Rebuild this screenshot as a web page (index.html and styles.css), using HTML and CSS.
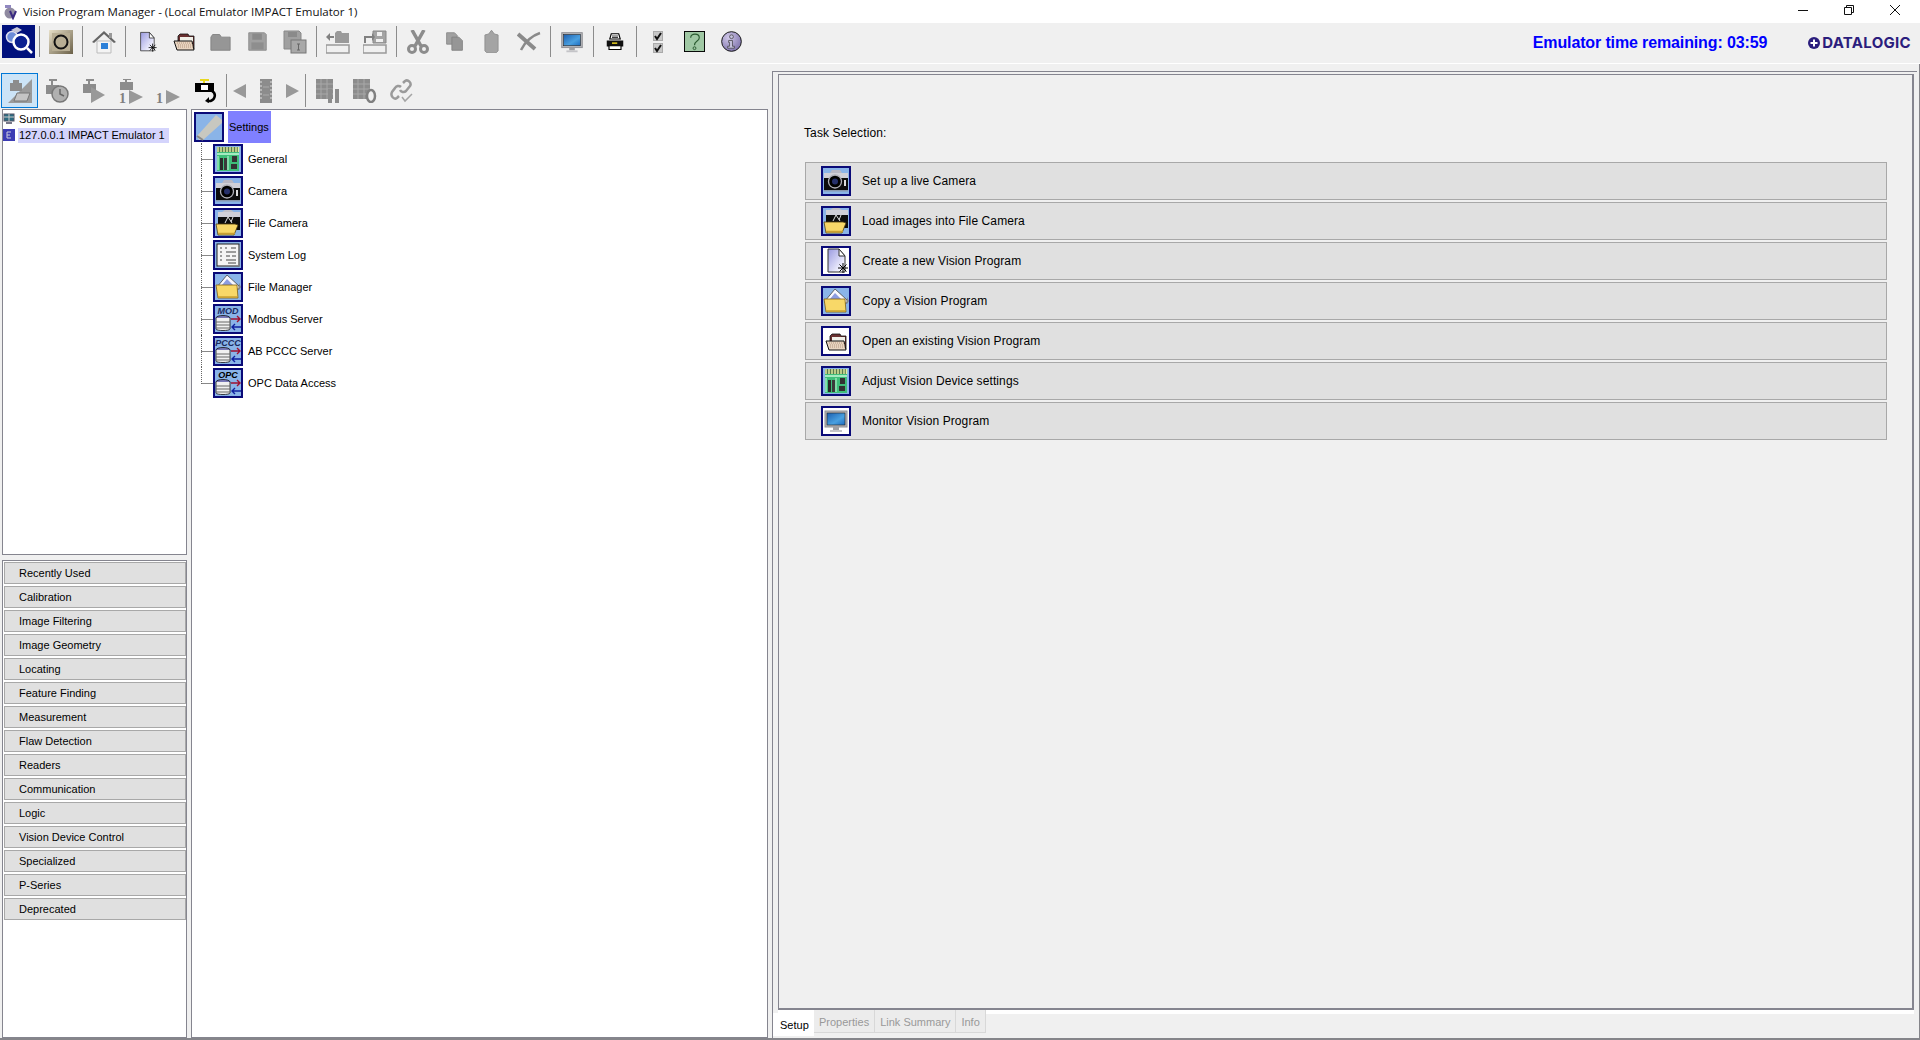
FILE: index.html
```html
<!DOCTYPE html>
<html lang="en">
<head>
<meta charset="utf-8">
<title>Vision Program Manager</title>
<link rel="stylesheet" href="styles.css">
</head>
<body>
<svg class="defs" width="0" height="0" aria-hidden="true">
  <defs>
    <linearGradient id="docg" x1="0" y1="0" x2="1" y2="1"><stop offset="0" stop-color="#9a9ae0"/><stop offset=".8" stop-color="#f4f4ff"/><stop offset="1" stop-color="#fff"/></linearGradient>
    <linearGradient id="scr" x1="0" y1="0" x2="1" y2="1"><stop offset="0" stop-color="#1c5fb0"/><stop offset=".6" stop-color="#4aa0e0"/><stop offset="1" stop-color="#1c6cc0"/></linearGradient>
    <linearGradient id="bev" x1="0" y1="0" x2="1" y2="1"><stop offset="0" stop-color="#e8e0c8"/><stop offset="1" stop-color="#6a6048"/></linearGradient>
    <radialGradient id="inf" cx=".35" cy=".3" r=".8"><stop offset="0" stop-color="#d0c8e8"/><stop offset="1" stop-color="#7a6ea8"/></radialGradient>

    <symbol id="board" viewBox="0 0 30 30">
      <rect x="4" y="3" width="22" height="24" fill="#3fbf7a"/>
      <rect x="4" y="3" width="22" height="5" fill="#5a7a50"/>
      <path d="M5 3v5M8 3v5M11 3v5M14 3v5M17 3v5M20 3v5M23 3v5M25.500 3v5" stroke="#e4f0a0" stroke-width="1.400"/>
      <path d="M4 10h22" stroke="#c8f8d8" stroke-width="1.500"/>
      <rect x="7" y="14" width="3" height="12" fill="#2a2a2a"/>
      <rect x="11" y="14" width="3" height="12" fill="#3a3a3a"/>
      <rect x="19" y="12" width="5" height="6" fill="#333"/>
      <rect x="18" y="20" width="6" height="5" fill="#333"/>
      <path d="M15 12v14M5 12v14" stroke="#c8f8d8" stroke-width="1"/>
    </symbol>
    <symbol id="camera" viewBox="0 0 30 30">
      <path d="M9 7l2-3h8l2 3z" fill="#b8b8c4"/>
      <rect x="3" y="7" width="24" height="6" fill="#d0d0d8"/>
      <rect x="3" y="12" width="24" height="12" fill="#0c0c0c"/>
      <rect x="3" y="24" width="24" height="1.500" fill="#8898b0"/>
      <circle cx="14" cy="15.500" r="6.500" fill="#000" stroke="#b0b0b8" stroke-width="1.300"/>
      <circle cx="14" cy="15.500" r="3" fill="#26306a"/>
      <path d="M23 14h2v6h-2z" fill="#ddd"/>
    </symbol>
    <symbol id="filecam" viewBox="0 0 30 30">
      <path d="M9 4l3-2h6l3 2z" fill="#c0c0c8"/>
      <rect x="5" y="4" width="22" height="5" fill="#d0d0d8"/>
      <rect x="5" y="9" width="22" height="13" fill="#0c0c0c"/>
      <path d="M12 15l3-6 4 6M20 9l-2 5" stroke="#ddd" stroke-width="1" fill="none"/>
      <path d="M3 16h19l3 1-4 10H5z" fill="#f8d868" stroke="#504010" stroke-width=".8"/>
      <path d="M5 25.500h17" stroke="#c8a030" stroke-width="1.500"/>
    </symbol>
    <symbol id="syslog" viewBox="0 0 30 30">
      <rect x="4" y="4" width="22" height="22" fill="#f4f4f4" stroke="#222" stroke-width="1"/>
      <path d="M7 8h2M12 8h2M18 8h5M7 12h2M13 12h10M7 16h2M13 16h4M19 16h4M7 20h2M13 20h10M15 23h8" stroke="#444" stroke-width="1.100"/>
      <path d="M26 5v21H5" stroke="#888" stroke-width="1.200" fill="none"/>
    </symbol>
    <symbol id="copyfolder" viewBox="0 0 30 30">
      <path d="M4 15L14 3l12 11v3H4z" fill="#f8f8ff" stroke="#444" stroke-width=".8"/>
      <path d="M9 13l5-6 6 6z" fill="#8c9ce0"/>
      <path d="M26 11l2 4-2 3z" fill="#888"/>
      <path d="M3 13h21l1 13H5z" fill="#f8d868" stroke="#806010" stroke-width=".8"/>
      <path d="M5 25h19" stroke="#c8a030" stroke-width="1.500"/>
    </symbol>
    <symbol id="server" viewBox="0 0 30 30">
      <ellipse cx="10" cy="14" rx="7" ry="2.500" fill="#7878b8" stroke="#111" stroke-width=".8"/>
      <path d="M3 14v11c0 2 14 2 14 0V14" fill="#f0f0f0" stroke="#111" stroke-width=".8"/>
      <path d="M3 18h14M3 21h14M3 24h14" stroke="#666" stroke-width="1"/>
      <path d="M18 15h9M24 12l3 3-3 3" fill="none" stroke="#a01030" stroke-width="1.400"/>
      <path d="M28 23h-9M22 20l-3 3 3 3" fill="none" stroke="#1020a0" stroke-width="1.400"/>
    </symbol>
    <symbol id="newdoc" viewBox="0 0 30 30">
      <path d="M7 3h11l6 7v16H7z" fill="url(#docg)" stroke="#333" stroke-width="1"/>
      <path d="M18 3v7h6z" fill="#fff" stroke="#333" stroke-width="1"/>
      <g stroke="#000" stroke-width="1"><path d="M22 17v10M17 22h10M18.500 18.500l7 7M25.500 18.500l-7 7"/></g>
    </symbol>
    <symbol id="openfolder" viewBox="0 0 30 30">
      <path d="M9 10l2-2h8l1 2h5v13H9z" fill="#6a3030" stroke="#111" stroke-width=".8"/>
      <path d="M11 11h13v11H11z" fill="#f0f0e8"/>
      <path d="M5 15h18l2 9H8z" fill="#e8d4c0" stroke="#111" stroke-width="1"/>
      <path d="M8 17h15M9 19h15M9 21h15" stroke="#a88870" stroke-width=".8" stroke-dasharray="1 1"/>
    </symbol>
    <symbol id="monitor" viewBox="0 0 30 30">
      <rect x="4" y="5" width="22" height="16" fill="#b4b4b8" stroke="#909094" stroke-width="1"/>
      <rect x="6" y="7" width="18" height="12" fill="url(#scr)" stroke="#222" stroke-width=".6"/>
      <path d="M12 21h6v3h-6z" fill="#a0a0a4"/>
      <path d="M9 24h12v2H9z" fill="#c4c4c8"/>
    </symbol>
  </defs>
</svg>

<div class="app">
  <header class="titlebar">
    <svg class="app-icon" viewBox="0 0 16 16"><circle cx="7" cy="9" r="5.500" fill="#8f8aa0"/><path d="M2 1h6v3H2z" fill="#9088c0"/><path d="M7 7l3 7 3-7" fill="none" stroke="#3a2a80" stroke-width="2"/></svg>
    <span class="title-text">Vision Program Manager - (Local Emulator IMPACT Emulator 1)</span>
    <div class="win-controls">
      <svg class="win-btn" viewBox="0 0 10 10"><path d="M0 5.500h10" stroke="#111" fill="none"/></svg>
      <svg class="win-btn" viewBox="0 0 10 10"><path d="M.5 2.500h7v7h-7zM2.500 2.500v-2h7v7h-2" stroke="#111" fill="none"/></svg>
      <svg class="win-btn" viewBox="0 0 10 10"><path d="M0 0l10 10M10 0L0 10" stroke="#111" fill="none"/></svg>
    </div>
  </header>

  <div class="toolbar">
    <button class="app-btn" type="button">
      <svg viewBox="0 0 33 33" width="33" height="33"><rect width="33" height="33" fill="#00107c"/><circle cx="10" cy="12" r="5.500" fill="#6c8cd8" stroke="#dde" stroke-width="1.500"/><path d="M9 5l6-3 5 3-5 3z" fill="#c8c8d8"/><circle cx="19" cy="17" r="7.500" fill="#0a2090" stroke="#fff" stroke-width="2.500"/><path d="M25 23l5 5" stroke="#fff" stroke-width="2.500"/></svg>
    </button>
    <i class="sep"></i>
    <div class="tool-group">
      <span class="slot"><svg viewBox="0 0 24 24" class="i24"><rect width="24" height="24" fill="url(#bev)"/><rect x="3" y="3" width="18" height="18" fill="#b8ae94"/><circle cx="12" cy="12" r="6.500" fill="none" stroke="#111" stroke-width="2"/></svg></span>
    </div>
    <i class="sep"></i>
    <div class="tool-group">
      <span class="slot"><svg viewBox="0 0 24 24" class="i24"><path d="M5 11h14v12H5z" fill="#f4f4f4" stroke="#bbb"/><path d="M0 12L12 1l12 11-2 1L12 4 2 13z" fill="#666"/><path d="M17 3h3v5h-3z" fill="#999"/><rect x="9" y="13" width="7" height="6" fill="#2c80d8"/></svg></span>
    </div>
    <i class="sep"></i>
    <div class="tool-group">
      <span class="slot"><svg viewBox="0 0 30 30" class="i24"><use href="#newdoc"/></svg></span>
      <span class="slot"><svg viewBox="4 6 22 20" class="i-open"><use href="#openfolder" width="30" height="30"/></svg></span>
      <span class="slot"><svg viewBox="0 0 24 24" class="i20"><path d="M1 7l2-3h8l2 3h10v15H1z" fill="#969696" stroke="#808080"/></svg></span>
      <span class="slot"><svg viewBox="0 0 24 24" class="i20"><path d="M2 2h18l2 2v18H2z" fill="#a0a0a0" stroke="#8a8a8a"/><rect x="6" y="3" width="11" height="7" fill="#8a8a8a"/><rect x="5" y="13" width="14" height="8" fill="#8e8e8e"/></svg></span>
      <span class="slot"><svg viewBox="0 0 24 24" class="i24"><path d="M1 1h15l2 2v16H1z" fill="#a0a0a0" stroke="#888"/><rect x="5" y="2" width="9" height="5" fill="#8a8a8a"/><rect x="8" y="10" width="15" height="13" fill="#a8a8a8" stroke="#777"/><path d="M14 14h3M15.500 14v6M14 20h3" stroke="#666"/></svg></span>
    </div>
    <i class="sep"></i>
    <div class="tool-group">
      <span class="slot"><svg viewBox="0 0 24 24" class="i24"><path d="M0 15h23v8H0z" fill="#f0f0f0" stroke="#999" stroke-width="1.500"/><path d="M9 3l2-2h4l1 2h7v10H9z" fill="#9a9a9a"/><path d="M8 6H4V3L0 7l4 4V8h4z" fill="#808080"/></svg></span>
      <span class="slot"><svg viewBox="0 0 24 24" class="i24"><path d="M0 15h23v8H0z" fill="#f0f0f0" stroke="#999" stroke-width="1.500"/><path d="M10 1h13v12H10z" fill="#a4a4a4" stroke="#888"/><path d="M14 2h5v4h-5zM13 9h7v3h-7z" fill="#f0f0f0"/><path d="M9 8H3v5H1V6h8V3l3 4-3 4z" fill="#808080"/></svg></span>
    </div>
    <i class="sep"></i>
    <div class="tool-group">
      <span class="slot"><svg viewBox="0 0 24 24" class="i24"><g fill="none" stroke="#8c8c8c" stroke-width="3.500"><path d="M6 0l9 16M18 0L9 16"/></g><g fill="none" stroke="#8c8c8c" stroke-width="3"><circle cx="6" cy="19" r="3.500"/><circle cx="18" cy="19" r="3.500"/></g></svg></span>
      <span class="slot"><svg viewBox="0 0 24 24" class="i20"><path d="M3 2h9l3 3v10H3z" fill="#a0a0a0" stroke="#888"/><path d="M9 7h8l4 4v11H9z" fill="#969696" stroke="#808080"/></svg></span>
      <span class="slot"><svg viewBox="0 0 16 24" class="clip"><path d="M1 5l4-1 3-4 3 4 4 1v17l-2 2H3l-2-2z" fill="#a4a4a4" stroke="#909090"/></svg></span>
      <span class="slot"><svg viewBox="0 0 24 24" class="i24"><path d="M1 4l17 15" stroke="#8a8a8a" stroke-width="4" fill="none"/><path d="M23 3C14 6 8 12 4 20" stroke="#8a8a8a" stroke-width="2.500" fill="none"/></svg></span>
    </div>
    <i class="sep"></i>
    <div class="tool-group">
      <span class="slot"><svg viewBox="0 0 30 30" class="i28"><use href="#monitor"/></svg></span>
    </div>
    <i class="sep"></i>
    <div class="tool-group">
      <span class="slot"><svg viewBox="0 0 24 24" class="i18"><path d="M7 1h10l2 7H5z" fill="#fff" stroke="#000" stroke-width="1.500"/><path d="M1 10h22v8H1z" fill="#111"/><path d="M4 17h16v5H4z" fill="#fff" stroke="#000" stroke-width="1.500"/><path d="M8 12.500h7v2H8z" fill="#e8d020"/><path d="M8 4h8M8 6h8" stroke="#000"/></svg></span>
    </div>
    <i class="sep"></i>
    <div class="tool-group">
      <span class="slot"><svg viewBox="0 0 10 22" class="check"><rect x=".5" y=".5" width="9" height="9" fill="#c8c8c8" stroke="#aaa"/><rect x=".5" y="12.500" width="9" height="9" fill="#c8c8c8" stroke="#aaa"/><path d="M2 5l2 3 4-6M2 17l2 3 4-6" fill="none" stroke="#111" stroke-width="2"/></svg></span>
      <span class="slot"><svg viewBox="0 0 22 22" class="i21"><rect x=".5" y=".5" width="21" height="21" fill="#a0c8a4" stroke="#000"/><path d="M7 7c0-5 9-5 9 0 0 4-5 3-5 8" fill="none" stroke="#2a5a30" stroke-width="1.200"/><circle cx="11" cy="18" r="1.500" fill="none" stroke="#2a5a30"/></svg></span>
      <span class="slot"><svg viewBox="0 0 22 22" class="i21"><circle cx="11" cy="11" r="10.300" fill="url(#inf)" stroke="#111"/><circle cx="11" cy="6" r="2" fill="#c8c4e0" stroke="#333" stroke-width=".7"/><path d="M8 10h4v6h2v2H7v-2h2v-4H8z" fill="#c8c4e0" stroke="#333" stroke-width=".7"/></svg></span>
    </div>
    <div class="status">
      <span class="emu-time">Emulator time remaining: 03:59</span>
      <span class="logo"><svg class="logo-mark" viewBox="0 0 12 12"><circle cx="6" cy="6" r="6" fill="#2b1d7d"/><path d="M6 2.500v7M2.500 6h7" stroke="#fff" stroke-width="2"/></svg><span class="logo-text">DATALOGIC</span></span>
    </div>
  </div>

  <div class="workspace">
    <section class="left-col">
      <div class="toolbar2">
        <span class="slot active"><svg viewBox="0 0 24 24" class="i24"><path d="M0 24L24 0v24z" fill="#9a9a9a"/><rect x="2" y="4" width="12" height="8" fill="#8c8c8c"/><path d="M5 1h6v3H5z" fill="#8c8c8c"/><path d="M6 22l3-8h13l-3 8z" fill="#c4c4c4" stroke="#777"/></svg></span>
        <span class="slot"><svg viewBox="0 0 24 24" class="i24"><rect x="1" y="6" width="13" height="9" fill="#8c8c8c"/><path d="M4 1h8M7 1v5" stroke="#8c8c8c" stroke-width="2"/><circle cx="15" cy="15" r="8" fill="#b0b0b0" stroke="#777" stroke-width="1.500"/><path d="M15 10v5l4 2" fill="none" stroke="#666" stroke-width="1.500"/></svg></span>
        <span class="slot"><svg viewBox="0 0 24 24" class="i24"><rect x="1" y="5" width="13" height="9" fill="#8c8c8c"/><path d="M4 1h8M7 1v4" stroke="#8c8c8c" stroke-width="2"/><path d="M9 8l14 8-14 8z" fill="#999"/></svg></span>
        <span class="slot"><svg viewBox="0 0 24 28" class="i-one"><rect x="1" y="3" width="13" height="8" fill="#8c8c8c"/><path d="M4 0h8M7 0v3" stroke="#8c8c8c" stroke-width="2"/><path d="M10 11l14 7-14 7z" fill="#999"/><text x="0" y="24" class="one">1</text></svg></span>
        <span class="slot"><svg viewBox="0 0 24 28" class="i-one"><path d="M10 11l14 7-14 7z" fill="#999"/><text x="0" y="24" class="one">1</text></svg></span>
        <span class="slot"><svg viewBox="0 0 24 24" class="i24"><path d="M7 1h9M11 1v3" stroke="#e8d820" stroke-width="2"/><path d="M2 4h19v9H2z" fill="#000"/><rect x="8" y="6" width="7" height="5" fill="#fff"/><path d="M19 12c5 3 3 11-5 10" fill="none" stroke="#000" stroke-width="2.500"/><path d="M16 18l-4 4 4 2z" fill="#000"/></svg></span>
        <i class="sep"></i>
        <span class="slot narrow"><svg viewBox="0 0 14 14" class="i14"><path d="M13 0v14L0 7z" fill="#999"/></svg></span>
        <span class="slot narrow"><svg viewBox="0 0 12 24" class="film"><rect width="12" height="24" fill="#8c8c8c"/><path d="M1 2v20M11 2v20" stroke="#c4c4c4" stroke-width="1.500" stroke-dasharray="2 2"/><path d="M3 8h6M3 16h6" stroke="#aaa"/></svg></span>
        <span class="slot narrow"><svg viewBox="0 0 14 14" class="i14"><path d="M1 0v14l13-7z" fill="#999"/></svg></span>
        <i class="sep end"></i>
        <span class="slot"><svg viewBox="0 0 24 24" class="i24"><rect x="0" width="17" height="20" fill="#8c8c8c"/><path d="M0 5h17M0 10h17M0 15h17M5 0v20M11 0v20" stroke="#a8a8a8"/><rect x="12" y="10" width="4" height="14" fill="#8c8c8c"/><rect x="19" y="10" width="4" height="14" fill="#8c8c8c"/></svg></span>
        <span class="slot"><svg viewBox="0 0 24 24" class="i24"><rect x="0" width="17" height="20" fill="#8c8c8c"/><path d="M0 5h17M0 10h17M0 15h17M5 0v20M11 0v20" stroke="#a8a8a8"/><ellipse cx="18" cy="17" rx="4" ry="6" fill="#f0f0f0" stroke="#808080" stroke-width="2.500"/></svg></span>
        <span class="slot"><svg viewBox="0 0 24 24" class="i24"><g fill="none" stroke="#9a9a9a" stroke-width="2.500"><path d="M13 4l2-2c3-2 7 2 5 5l-4 5c-2 2-5 1-6-1"/><path d="M11 8c-2-2-5-1-6 1l-3 4c-2 4 2 8 5 6l2-2"/></g><path d="M12 18l3 4 7-7" fill="none" stroke="#a4a4a4" stroke-width="1.500"/></svg></span>
      </div>
      <div class="panes">
        <div class="side">
          <div class="pane tree">
            <div class="tree-row"><svg viewBox="0 0 12 12" class="mini"><rect x="1" y="1" width="10" height="7" fill="#2a6a80" stroke="#556"/><path d="M1 4h10M6 1v7" stroke="#ccc"/><path d="M3 10h6" stroke="#778" stroke-width="2"/></svg><span class="tree-label">Summary</span></div>
            <div class="tree-row"><svg viewBox="0 0 12 12" class="mini"><rect width="12" height="12" fill="#3c3cb4"/><path d="M4 3h4M4 6h3M4 9h4M4 3v6" stroke="#ccd"/></svg><span class="tree-label selected">127.0.0.1 IMPACT Emulator 1</span></div>
          </div>
          <div class="pane palette">
            <div class="pal-row">Recently Used</div>
            <div class="pal-row">Calibration</div>
            <div class="pal-row">Image Filtering</div>
            <div class="pal-row">Image Geometry</div>
            <div class="pal-row">Locating</div>
            <div class="pal-row">Feature Finding</div>
            <div class="pal-row">Measurement</div>
            <div class="pal-row">Flaw Detection</div>
            <div class="pal-row">Readers</div>
            <div class="pal-row">Communication</div>
            <div class="pal-row">Logic</div>
            <div class="pal-row">Vision Device Control</div>
            <div class="pal-row">Specialized</div>
            <div class="pal-row">P-Series</div>
            <div class="pal-row">Deprecated</div>
          </div>
        </div>
        <div class="pane settings">
          <div class="set-root">
            <svg viewBox="0 0 30 30" class="ico blue"><rect x="1" y="1" width="28" height="28" class="frame"/><path d="M3 24L22 3l6 5v3L9 28H5z" fill="#c8c8c0"/><path d="M3 24l6 4" stroke="#888" stroke-width="2"/></svg>
            <span class="set-root-label">Settings</span>
          </div>
          <ul class="kids">
            <li class="kid"><svg viewBox="0 0 30 30" class="ico blue"><rect x="1" y="1" width="28" height="28" class="frame"/><use href="#board"/></svg><span>General</span></li>
            <li class="kid"><svg viewBox="0 0 30 30" class="ico blue"><rect x="1" y="1" width="28" height="28" class="frame"/><use href="#camera"/></svg><span>Camera</span></li>
            <li class="kid"><svg viewBox="0 0 30 30" class="ico blue"><rect x="1" y="1" width="28" height="28" class="frame"/><use href="#filecam"/></svg><span>File Camera</span></li>
            <li class="kid"><svg viewBox="0 0 30 30" class="ico blue"><rect x="1" y="1" width="28" height="28" class="frame"/><use href="#syslog"/></svg><span>System Log</span></li>
            <li class="kid"><svg viewBox="0 0 30 30" class="ico blue"><rect x="1" y="1" width="28" height="28" class="frame"/><use href="#copyfolder"/></svg><span>File Manager</span></li>
            <li class="kid"><svg viewBox="0 0 30 30" class="ico blue"><rect x="1" y="1" width="28" height="28" class="frame"/><text x="15" y="10" class="srv dim">MOD</text><use href="#server"/></svg><span>Modbus Server</span></li>
            <li class="kid"><svg viewBox="0 0 30 30" class="ico blue"><rect x="1" y="1" width="28" height="28" class="frame"/><text x="15" y="10" class="srv dim">PCCC</text><use href="#server"/></svg><span>AB PCCC Server</span></li>
            <li class="kid"><svg viewBox="0 0 30 30" class="ico blue"><rect x="1" y="1" width="28" height="28" class="frame"/><text x="15" y="10" class="srv">OPC</text><use href="#server"/></svg><span>OPC Data Access</span></li>
          </ul>
        </div>
      </div>
    </section>

    <section class="right-col">
      <div class="tab-frame">
        <div class="tab-page">
          <p class="task-title">Task Selection:</p>
          <div class="task-list">
            <div class="task"><svg viewBox="0 0 30 30" class="ico blue"><rect x="1" y="1" width="28" height="28" class="frame"/><use href="#camera"/></svg><span>Set up a live Camera</span></div>
            <div class="task"><svg viewBox="0 0 30 30" class="ico blue"><rect x="1" y="1" width="28" height="28" class="frame"/><use href="#filecam"/></svg><span>Load images into File Camera</span></div>
            <div class="task"><svg viewBox="0 0 30 30" class="ico plain"><rect x="1" y="1" width="28" height="28" class="frame"/><use href="#newdoc"/></svg><span>Create a new Vision Program</span></div>
            <div class="task"><svg viewBox="0 0 30 30" class="ico blue"><rect x="1" y="1" width="28" height="28" class="frame"/><use href="#copyfolder"/></svg><span>Copy a Vision Program</span></div>
            <div class="task"><svg viewBox="0 0 30 30" class="ico plain"><rect x="1" y="1" width="28" height="28" class="frame"/><use href="#openfolder"/></svg><span>Open an existing Vision Program</span></div>
            <div class="task"><svg viewBox="0 0 30 30" class="ico blue"><rect x="1" y="1" width="28" height="28" class="frame"/><use href="#board"/></svg><span>Adjust Vision Device settings</span></div>
            <div class="task"><svg viewBox="0 0 30 30" class="ico plain"><rect x="1" y="1" width="28" height="28" class="frame"/><use href="#monitor"/></svg><span>Monitor Vision Program</span></div>
          </div>
        </div>
        <div class="tabs">
          <span class="tab current">Setup</span>
          <span class="tab">Properties</span>
          <span class="tab">Link Summary</span>
          <span class="tab">Info</span>
        </div>
      </div>
    </section>
  </div>
</div>
</body>
</html>
```

FILE: styles.css
```css
* { box-sizing: border-box; }
html, body { margin: 0; padding: 0; height: 1040px; overflow: hidden; }
body { font: 12px/15px "Liberation Sans", Arial, sans-serif; color: #000; background: #f0f0f0; }
.defs { display: block; height: 0; }
.app { display: flex; flex-direction: column; height: 1040px; }

.titlebar { height: 23px; background: #fff; display: flex; align-items: center; padding-left: 3px; flex: none; }
.app-icon { width: 16px; height: 16px; margin-right: 4px; }
.title-text { font: 11.5px/16px "Open Sans", "Noto Sans", sans-serif; color: #111; }
.win-controls { margin-left: auto; display: flex; height: 100%; align-items: flex-start; }
.win-btn { width: 10px; height: 10px; margin: 5px 20px 0 16px; display: block; }

.toolbar { height: 41px; flex: none; background: #f0f0f0; border-bottom: 1px solid #fff; display: flex; align-items: center; padding: 0 0 3px 2px; }
.app-btn { width: 33px; height: 33px; padding: 0; border: 0; background: none; display: block; margin-right: 4px; }
.app-btn svg { display: block; }
.sep { flex: none; display: block; width: 1px; height: 31px; background: #8c8c8c; }
.tool-group { display: flex; padding: 0 3px 0 2px; }
.slot { width: 37px; height: 36px; flex: none; display: flex; align-items: center; justify-content: center; }
.i24 { width: 24px; height: 24px; display: block; }
.i28 { width: 28px; height: 28px; display: block; }
.i20 { width: 21px; height: 21px; display: block; }
.i-open { width: 22px; height: 20px; display: block; }
.clip { width: 15px; height: 23px; display: block; }
.i18 { width: 18px; height: 18px; display: block; }
.i21 { width: 21px; height: 21px; display: block; }
.i14 { width: 14px; height: 14px; display: block; }
.i-one { width: 24px; height: 28px; margin-top: 4px; display: block; }
.film { width: 12px; height: 24px; display: block; }
.check { width: 10px; height: 22px; display: block; }
.one { font: bold 14px "Liberation Serif", serif; fill: #808080; }
.status { margin-left: auto; display: flex; align-items: center; padding: 3px 9px 0 0; }
.emu-time { font: bold 16px/20px "Liberation Sans", Arial, sans-serif; color: #0000ff; margin-right: 41px; letter-spacing: -.13px; }
.logo { display: flex; align-items: center; gap: 2px; }
.logo-mark { width: 12px; height: 12px; display: block; }
.logo-text { font: bold 15px/16px "Inter", "Liberation Sans", sans-serif; color: #2b1d7d; letter-spacing: .3px; }

.workspace { flex: 1; min-height: 0; display: flex; border-bottom: 2px solid #85858a; border-right: 1px solid #85858a; }
.left-col { width: 770px; flex: none; display: flex; flex-direction: column; }
.toolbar2 { height: 45px; flex: none; display: flex; align-items: flex-end; padding: 0 0 1px 1px; }
.toolbar2 .slot { height: 35px; }
.toolbar2 .sep { height: 33px; margin: 0 0 1px 3px; }
.toolbar2 .sep.end { margin: 0 3px 1px 0; }
.slot.active { background: #cce4f7; border: 1px solid #0078d7; }
.toolbar2 .slot.narrow { width: 26px; }
.panes { flex: 1; min-height: 0; display: flex; padding-left: 2px; font-size: 11px; }
.side { width: 185px; flex: none; display: flex; flex-direction: column; gap: 5px; margin-right: 4px; }
.pane { background: #fff; border: 1px solid #85858f; }
.tree { height: 446px; flex: none; padding-top: 1px; }
.tree-row { display: flex; align-items: center; height: 16px; }
.mini { width: 12px; height: 12px; flex: none; margin-right: 3px; display: block; }
.tree-label { padding: 0 1px; white-space: nowrap; }
.tree-label.selected { background: #d4d4fc; padding-right: 4px; }
.palette { flex: 1; padding: 1px 0 0 1px; display: flex; flex-direction: column; gap: 2px; }
.pal-row { height: 22px; flex: none; background: #e0e0e0; border: 1px solid #a8a8a8; line-height: 20px; padding-left: 14px; }

.settings { width: 577px; flex: none; padding: 1px 0 0 2px; }
.set-root { display: flex; align-items: center; height: 32px; }
.set-root-label { margin-left: 4px; height: 32px; line-height: 32px; padding: 0 1px; width: 43px; background: #8080ff; }
.ico { width: 30px; height: 30px; flex: none; display: block; }
.frame { stroke: #0a0a78; stroke-width: 2; }
.blue .frame { fill: #8ab4e8; }
.plain .frame { fill: #fff; }
.kids { list-style: none; margin: 0 0 0 7px; padding: 0; }
.kid { position: relative; display: flex; align-items: center; height: 32px; padding-left: 12px; }
.kid::before { content: ""; position: absolute; left: 0; top: 16px; width: 12px; height: 1px; background: #888; }
.kid::after { content: ""; position: absolute; left: 0; top: 0; bottom: 0; border-left: 1px dotted #666; }
.kid:last-child::after { bottom: 15px; }
.kid span { margin-left: 5px; }
.srv { font: italic bold 9px "Liberation Sans", sans-serif; text-anchor: middle; fill: #000; }
.srv.dim { fill: #1a2a60; }

.right-col { flex: 1; min-width: 0; padding: 7px 2px 0 2px; display: flex; }
.tab-frame { flex: 1; min-width: 0; border-top: 1px solid #85858f; border-left: 1px solid #85858f; display: flex; flex-direction: column; }
.tab-page { height: 936px; flex: none; margin: 2px 3px 0 5px; border: 1px solid #85858f; border-width: 1px 2px 2px 1px; padding: 51px 0 0 25px; background: #f0f0f0; box-shadow: 0 4px 0 #fff; }
.task-title { margin: 0 0 21px; line-height: 15px; letter-spacing: .12px; }
.task-list { display: flex; flex-direction: column; gap: 2px; width: 1082px; margin-left: 1px; }
.task { height: 38px; flex: none; border: 1px solid #a8a8a8; background: #e0e0e0; display: flex; align-items: center; padding-left: 15px; letter-spacing: .1px; }
.task span { margin-left: 11px; }
.tabs { display: flex; align-items: flex-start; font-size: 11px; }
.tab { height: 23px; padding: 5px 5px 0; border: 1px solid #d8d8d8; border-width: 0 1px 1px 0; color: #999; background: #ececec; }
.tab.current { margin-top: 3px; border: 0; padding: 5px 7px 0; width: 41px; background: #fff; color: #000; }
```
